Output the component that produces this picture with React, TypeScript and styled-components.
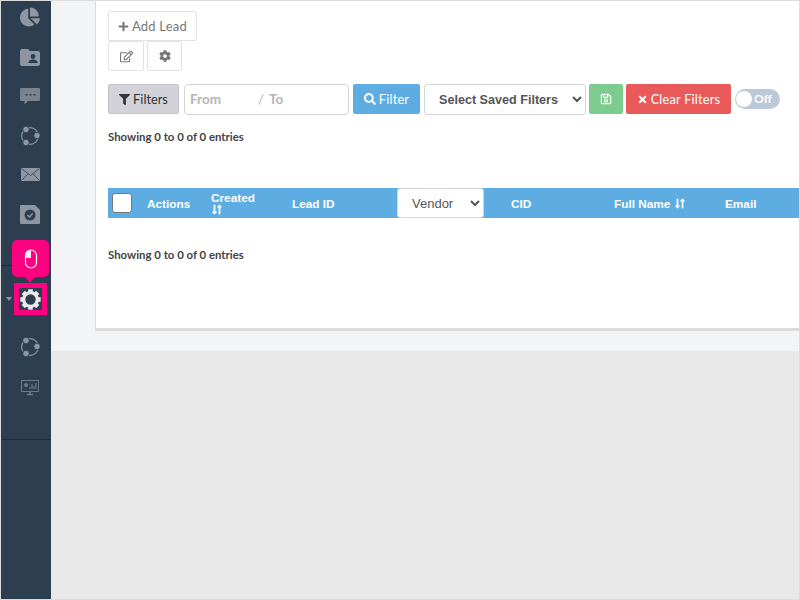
import styled, { createGlobalStyle } from "styled-components";
import {
  FaChartPie,
  FaCog,
  FaFilter,
  FaPlus,
  FaRegEdit,
  FaRegSave,
  FaSearch,
  FaTimes,
  FaLongArrowAltDown,
  FaLongArrowAltUp,
} from "react-icons/fa";

const GlobalStyle = createGlobalStyle`
  html, body {
    margin: 0;
    padding: 0;
    background: #e8e8e8;
  }
  * {
    box-sizing: border-box;
  }
`;

const Page = styled.div`
  width: 800px;
  height: 600px;
  display: flex;
  overflow: hidden;
  border: 1px solid #dcdcdc;
  font-family: "Lato", sans-serif;
`;

const Sidebar = styled.aside`
  width: 50px;
  flex: none;
  height: 100%;
  background: #2c3e50;
  display: flex;
  flex-direction: column;
  position: relative;
`;

const NavItem = styled.div<{ $h: number }>`
  height: ${(p) => p.$h}px;
  flex: none;
  display: flex;
  align-items: center;
  justify-content: center;
  padding-left: 8px;
  color: #8f96a3;
  position: relative;
`;

const ActiveBox = styled.div`
  width: 33px;
  height: 32px;
  background: #2c3e50;
  border: 5px solid #ff0080;
  color: #e9e9ee;
  display: flex;
  align-items: center;
  justify-content: center;
`;

const Caret = styled.span`
  position: absolute;
  left: 5px;
  top: 14px;
  width: 0;
  height: 0;
  border-left: 3.5px solid transparent;
  border-right: 3.5px solid transparent;
  border-top: 4px solid #8f96a3;
`;

const Tooltip = styled.div`
  position: absolute;
  left: 11px;
  top: 239px;
  width: 37px;
  height: 37px;
  border-radius: 5px;
  background: #ff0080;
  display: flex;
  align-items: center;
  justify-content: center;
  z-index: 2;

  &::after {
    content: "";
    position: absolute;
    left: 13px;
    bottom: -6px;
    border-left: 5px solid transparent;
    border-right: 5px solid transparent;
    border-top: 6px solid #ff0080;
  }
`;

const SideRule = styled.div<{ $top: number }>`
  position: absolute;
  left: 0;
  right: 0;
  top: ${(p) => p.$top}px;
  height: 1px;
  background: #1f2d3b;
`;

const Main = styled.main`
  flex: 1;
  min-width: 0;
  display: flex;
  flex-direction: column;
`;

const Band = styled.div`
  height: 350px;
  flex: none;
  background: #f2f4f6;
  padding-left: 44px;
  padding-bottom: 20px;
`;

const Card = styled.section`
  height: 330px;
  background: #fff;
  border-left: 1px solid #dcdcdc;
  border-bottom: 3px solid #dcdcdc;
  padding: 10px 0 0 12px;
`;

const Toolbar = styled.div`
  display: flex;
  gap: 3px;
`;

const GhostButton = styled.button<{ $w: number }>`
  width: ${(p) => p.$w}px;
  height: 30px;
  padding: 0;
  background: #fff;
  border: 1px solid #e3e3e3;
  border-radius: 2px;
  color: #777;
  font-family: "Lato", sans-serif;
  font-size: 13px;
  letter-spacing: 0.2px;
  display: flex;
  align-items: center;
  justify-content: center;
  gap: 3px;
`;

const FilterRow = styled.div`
  display: flex;
  align-items: center;
  margin-top: 12px;
  height: 32px;
`;

const FiltersToggle = styled.button`
  width: 71px;
  height: 30px;
  margin-right: 5px;
  padding: 0;
  background: #d2d2d8;
  border: 1px solid #c4c4ca;
  border-radius: 2px;
  color: #333;
  font-family: "Lato", sans-serif;
  font-size: 12.8px;
  display: flex;
  align-items: center;
  justify-content: center;
  gap: 3px;
`;

const DateRange = styled.div`
  width: 165px;
  height: 31px;
  margin-right: 4px;
  border: 1px solid #d5d5d5;
  border-radius: 4px;
  background: #fff;
  display: flex;
  align-items: center;
  padding-left: 5px;
  color: #b5b5b5;
  font-size: 13.5px;
  font-weight: 700;
`;

const RangeSep = styled.span`
  margin: 0 5px 0 37px;
  font-weight: 400;
`;

const ColorButton = styled.button<{ $bg: string; $w: number; $mr: number }>`
  width: ${(p) => p.$w}px;
  height: 30px;
  margin-right: ${(p) => p.$mr}px;
  padding: 0;
  border: none;
  border-radius: 2px;
  background: ${(p) => p.$bg};
  color: #fff;
  font-family: "Lato", sans-serif;
  font-size: 12.8px;
  letter-spacing: 0.2px;
  display: flex;
  align-items: center;
  justify-content: center;
  gap: 3px;
`;

const SavedSelect = styled.select`
  width: 162px;
  height: 31px;
  margin-right: 3px;
  padding: 1px 0 0 10px;
  border: 1px solid #d5d5d5;
  border-radius: 3px;
  background: #fff;
  color: #555;
  font-family: "Liberation Sans", sans-serif;
  font-size: 12.6px;
  font-weight: 700;
`;

const Toggle = styled.div`
  width: 45px;
  height: 20px;
  margin-left: 4px;
  border-radius: 10px;
  background: #bcc8d8;
  display: flex;
  align-items: center;
  padding: 0 0 1px 1px;
  gap: 2px;
  color: #fff;
  font-size: 12px;
  font-weight: 700;
`;

const Knob = styled.span`
  width: 16px;
  height: 16px;
  margin-top: 1px;
  border-radius: 50%;
  background: #fff;
`;

const Entries = styled.p<{ $mt: number }>`
  margin: ${(p) => p.$mt}px 0 0;
  color: #444;
  font-family: "Lato", sans-serif;
  font-size: 11.4px;
  font-weight: 700;
  line-height: 14px;
`;

const TableHead = styled.div`
  height: 30px;
  margin-top: 44px;
  background: #5dade2;
  display: flex;
  align-items: center;
  color: #fff;
  font-family: "Liberation Sans", sans-serif;
  font-size: 11.8px;
  font-weight: 700;
`;

const HeadCheck = styled.input`
  appearance: none;
  width: 20px;
  height: 20px;
  margin: 0 0 0 4px;
  background: #fff;
  border: 1px solid #777;
  border-radius: 3px;
  flex: none;
`;

const HeadCell = styled.div<{ $w: number }>`
  width: ${(p) => p.$w}px;
  flex: none;
  padding-top: 2px;
  line-height: 12px;
`;

const SortIcon = styled.span`
  display: inline-flex;
  vertical-align: -1px;
  margin-left: -2px;
  font-size: 11px;

  svg + svg {
    margin-left: -6px;
  }
`;

const VendorSelect = styled.select`
  width: 87px;
  height: 30px;
  margin-right: 27px;
  flex: none;
  padding: 0 0 0 10px;
  border: 1px solid #d5d5d5;
  border-radius: 3px;
  background: #fff;
  color: #555;
  font-family: "Liberation Sans", sans-serif;
  font-size: 13px;
`;

const Lower = styled.div`
  flex: 1;
  background: #e8e8e8;
`;

const FolderIcon = () => (
  <svg width="20" height="17" viewBox="0 0 20 17">
    <path
      fill="currentColor"
      d="M2 0h6l2 2h8a2 2 0 0 1 2 2v11a2 2 0 0 1-2 2H2a2 2 0 0 1-2-2V2a2 2 0 0 1 2-2z"
    />
    <circle cx="13" cy="7.5" r="2.4" fill="#2c3e50" />
    <path fill="#2c3e50" d="M8.5 14c0-2.4 2-3.4 4.5-3.4s4.500 1 4.500 3.400z" />
  </svg>
);

const ChatIcon = () => (
  <svg width="20" height="17" viewBox="0 0 20 17">
    <path
      fill="#7b8290"
      d="M1 0h18a1 1 0 0 1 1 1v11a1 1 0 0 1-1 1H8l-3.500 3.500V13H1a1 1 0 0 1-1-1V1a1 1 0 0 1 1-1z"
    />
    <rect x="5.500" y="6" width="2" height="1.500" fill="#2c3e50" />
    <rect x="9.500" y="6" width="2" height="1.500" fill="#2c3e50" />
    <rect x="13.500" y="6" width="2" height="1.500" fill="#2c3e50" />
  </svg>
);

const OrbitIcon = () => (
  <svg width="20" height="20" viewBox="0 0 20 20">
    <circle cx="10" cy="10" r="8.400" fill="none" stroke="currentColor" strokeWidth="1.200" />
    <circle cx="6" cy="3.500" r="3.200" fill="currentColor" stroke="#2c3e50" strokeWidth="0.800" />
    <circle cx="17" cy="9.500" r="3.200" fill="currentColor" stroke="#2c3e50" strokeWidth="0.800" />
    <circle cx="6" cy="16.500" r="3.200" fill="currentColor" stroke="#2c3e50" strokeWidth="0.800" />
  </svg>
);

const MailIcon = () => (
  <svg width="19" height="13" viewBox="0 0 19 13">
    <rect width="19" height="13" fill="currentColor" />
    <path d="M0.500 0.500L9.500 7.500L18.500 0.500M0.500 12.500L7 5.800M18.500 12.500L12 5.800" fill="none" stroke="#2c3e50" strokeWidth="0.800" />
  </svg>
);

const CheckDocIcon = () => (
  <svg width="20" height="19" viewBox="0 0 20 19">
    <path
      fill="currentColor"
      d="M1 0h14l5 5v13a1 1 0 0 1-1 1H1a1 1 0 0 1-1-1V1a1 1 0 0 1 1-1z"
    />
    <circle cx="10" cy="10" r="5.500" fill="#2c3e50" />
    <path d="M7.500 10l2 2 3.200-3.600" fill="none" stroke="#8f96a3" strokeWidth="1.500" />
  </svg>
);

const MouseIcon = () => (
  <svg width="14" height="20" viewBox="0 0 14 20">
    <rect x="1.500" y="1" width="11" height="18" rx="5.500" fill="none" stroke="#fff" strokeWidth="1.200" />
    <path d="M7 1a5.500 5.500 0 0 0-5.500 5.500v2.500h5.500z" fill="#fff" opacity="0.9" />
  </svg>
);

const GearIcon = () => (
  <svg width="21" height="21" viewBox="0 0 21 21" style={{ flex: "none" }}>
    <circle cx="10.5" cy="10.5" r="6.800" fill="none" stroke="currentColor" strokeWidth="3.200" />
    {[0, 45, 90, 135, 180, 225, 270, 315].map((a) => (
      <rect
        key={a}
        x="8.200"
        y="0.300"
        width="4.600"
        height="3.500"
        fill="currentColor"
        transform={`rotate(${a} 10.5 10.5)`}
      />
    ))}
  </svg>
);

const MonitorIcon = () => (
  <svg width="18" height="16" viewBox="0 0 18 16">
    <rect x="0.500" y="0.500" width="17" height="11" fill="none" stroke="#6f7886" strokeWidth="1" />
    <circle cx="5" cy="5" r="2" fill="#6f7886" />
    <path d="M9 9V7M11 9V4M13 9V6M15 9V3" stroke="#6f7886" strokeWidth="1.200" />
    <path d="M6 14.500h6M9 12v2" stroke="#6f7886" strokeWidth="1.500" />
  </svg>
);

const SortArrows = () => (
  <SortIcon>
    <FaLongArrowAltDown />
    <FaLongArrowAltUp />
  </SortIcon>
);

export default function App() {
  return (
    <>
      <GlobalStyle />
      <Page>
        <Sidebar>
          <NavItem $h={32}>
            <FaChartPie size={20} />
          </NavItem>
          <NavItem $h={48}>
            <FolderIcon />
          </NavItem>
          <NavItem $h={30}>
            <ChatIcon />
          </NavItem>
          <NavItem $h={50}>
            <OrbitIcon />
          </NavItem>
          <NavItem $h={26}>
            <MailIcon />
          </NavItem>
          <NavItem $h={54}>
            <CheckDocIcon />
          </NavItem>
          <NavItem $h={42} />
          <NavItem $h={32}>
            <Caret />
            <ActiveBox>
              <GearIcon />
            </ActiveBox>
          </NavItem>
          <NavItem $h={64}>
            <OrbitIcon />
          </NavItem>
          <NavItem $h={18}>
            <MonitorIcon />
          </NavItem>
          <Tooltip>
            <MouseIcon />
          </Tooltip>
          <SideRule $top={264} />
          <SideRule $top={438} />
        </Sidebar>
        <Main>
          <Band>
            <Card>
              <GhostButton $w={89}>
                <FaPlus size={11} />
                Add Lead
              </GhostButton>
              <Toolbar>
                <GhostButton $w={36}>
                  <FaRegEdit size={13} />
                </GhostButton>
                <GhostButton $w={35}>
                  <FaCog size={12} />
                </GhostButton>
              </Toolbar>
              <FilterRow>
                <FiltersToggle>
                  <FaFilter size={11} />
                  Filters
                </FiltersToggle>
                <DateRange>
                  From
                  <RangeSep>/</RangeSep>
                  To
                </DateRange>
                <ColorButton $bg="#5dade2" $w={67} $mr={4}>
                  <FaSearch size={12} />
                  Filter
                </ColorButton>
                <SavedSelect defaultValue="saved">
                  <option value="saved">Select Saved Filters</option>
                </SavedSelect>
                <ColorButton $bg="#7dcb8f" $w={34} $mr={3}>
                  <FaRegSave size={12} />
                </ColorButton>
                <ColorButton $bg="#e95b5b" $w={105} $mr={0}>
                  <FaTimes size={11} />
                  Clear Filters
                </ColorButton>
                <Toggle>
                  <Knob />
                  Off
                </Toggle>
              </FilterRow>
              <Entries $mt={15}>Showing 0 to 0 of 0 entries</Entries>
              <TableHead>
                <HeadCheck type="checkbox" />
                <HeadCell $w={15} />
                <HeadCell $w={64}>Actions</HeadCell>
                <HeadCell $w={81}>
                  Created
                  <br />
                  <SortArrows />
                </HeadCell>
                <HeadCell $w={105}>Lead ID</HeadCell>
                <VendorSelect defaultValue="vendor">
                  <option value="vendor">Vendor</option>
                </VendorSelect>
                <HeadCell $w={103}>CID</HeadCell>
                <HeadCell $w={111}>
                  Full Name <SortArrows />
                </HeadCell>
                <HeadCell $w={60}>Email</HeadCell>
              </TableHead>
              <Entries $mt={30}>Showing 0 to 0 of 0 entries</Entries>
            </Card>
          </Band>
          <Lower />
        </Main>
      </Page>
    </>
  );
}
